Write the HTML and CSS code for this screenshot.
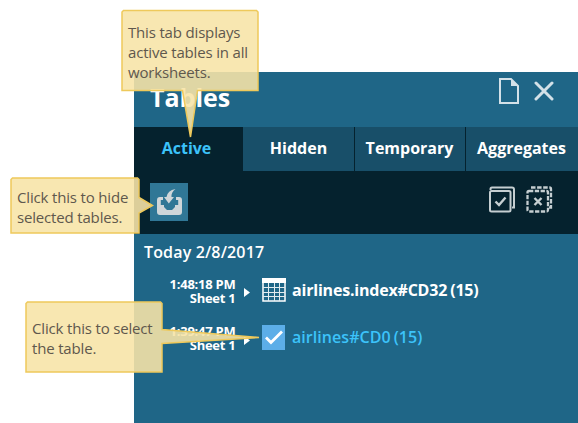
FILE: index.html
```html
<!DOCTYPE html>
<html lang="en">
<head>
<meta charset="utf-8">
<title>Tables</title>
<link rel="stylesheet" href="styles.css">
</head>
<body>
<main class="panel">
  <header class="head">
    <h1>Tables</h1>
    <div class="head-icons">
      <svg width="20" height="26" viewBox="0 0 20 26"><path d="M1 1H12L19 8V25H1Z" fill="none" stroke="#d3e1e8" stroke-width="2"/><path d="M12 1V8H19Z" fill="#d3e1e8"/></svg>
      <svg width="20" height="20" viewBox="0 0 20 20"><path d="M2 2L18 18M18 2L2 18" stroke="#d3e1e8" stroke-width="3" stroke-linecap="round"/></svg>
    </div>
  </header>
  <nav class="tabs">
    <span class="tab active">Active</span>
    <span class="tab hidden-tab">Hidden</span>
    <span class="tab">Temporary</span>
    <span class="tab aggregates">Aggregates</span>
  </nav>
  <div class="toolbar">
    <span class="hide-button">
      <svg width="38" height="38" viewBox="0 0 38 38"><path d="M7 17Q7 14 10 14H13V17H10.800V22H14V24L17 27H22L25 24V22H28.200V17H26V14H29Q32 14 32 17V29Q32 32 29 32H10Q7 32 7 29Z" fill="#cfd6d9"/><path d="M25.500 6Q21 9.500 21.500 14H24L18.800 20.500L14 14H16.500Q17.500 7.500 25.500 6Z" fill="#cfd6d9"/></svg>
    </span>
    <div class="select-icons">
      <svg width="27" height="27" viewBox="0 0 27 27" fill="none" stroke="#c5ced1" stroke-width="2"><rect x="2" y="5" width="20.500" height="20.500" rx="1.500"/><path d="M2.500 4V3Q2.500 1.500 4 1.500H24Q26 1.500 26 3.500V21.500H24"/><path d="M7.500 15.500L11 19L17.500 11.500" stroke-width="2.400"/></svg>
      <svg width="27" height="27" viewBox="0 0 27 27" fill="none" stroke="#c5ced1" stroke-width="2.300"><rect x="1.500" y="5" width="20.500" height="20.500" rx="1.500" stroke-dasharray="4.300 1.500"/><path d="M5 1.500H23.500Q25 1.500 25 3V21.500H23" stroke-dasharray="4.500 1.600"/><path d="M8.500 12L15.500 19M15.500 12L8.500 19" stroke-width="2.400"/></svg>
    </div>
  </div>
  <section class="list">
    <h2>Today 2/8/2017</h2>
    <div class="row">
      <div class="stamp"><div>1:48:18 PM</div><div>Sheet 1</div></div>
      <svg class="arrow" width="6" height="9" viewBox="0 0 6 9"><path d="M0 0L6 4.500L0 9Z" fill="#fff"/></svg>
      <svg class="mark" width="24" height="24" viewBox="0 0 24 24" fill="none" stroke="#e3ecf0"><rect x="1" y="1" width="22" height="22" stroke="#fff" stroke-width="1.500"/><path d="M0 2.500H24" stroke="#fff" stroke-width="5"/><path d="M1 9.500H23M1 14.500H23M1 18.500H23M6.500 5V23M12.500 5V23M17.500 5V23"/></svg>
      <span class="name">airlines.index#CD32</span><span class="count">(15)</span>
    </div>
    <div class="row selected">
      <div class="stamp"><div>1:39:47 PM</div><div>Sheet 1</div></div>
      <svg class="arrow" width="6" height="9" viewBox="0 0 6 9"><path d="M0 0L6 4.500L0 9Z" fill="#fff"/></svg>
      <svg class="mark" width="24" height="25" viewBox="0 0 24 25"><path d="M0 0H23V25H0Z" fill="#5caee8"/><path d="M4 12.500L9 17.500L20 6.500" fill="none" stroke="#fff" stroke-width="2.800"/></svg>
      <span class="name">airlines#CD0</span><span class="count">(15)</span>
    </div>
  </section>
</main>
<svg class="bubbles" width="578" height="423" viewBox="0 0 578 423">
  <path d="M123.500 10.500H256.500L258 12V90.500H197.500L190.500 137L182.500 90.500H122V12Z"/>
  <path d="M12.500 178H137.500L139 179.500V197.500L152.500 205.500L139 213V233H11V179.500Z"/>
  <path d="M27.500 302H160.500L162 303.500V329.500L259 337.500L162 343.500V372H26V303.500Z"/>
</svg>
<p class="note note-tab">This tab displays<br>active tables in all<br>worksheets.</p>
<p class="note note-hide">Click this to hide<br>selected tables.</p>
<p class="note note-select">Click this to select<br>the table.</p>
</body>
</html>
```
FILE: styles.css
```css
* { box-sizing: border-box; }
body {
  margin: 0;
  height: 423px;
  overflow: hidden;
  background: #fff;
  font-family: "Open Sans", sans-serif;
  color: #fff;
}
svg { display: block; flex: none; }
h1, h2, p { margin: 0; }
.panel {
  margin: 72px 0 0 134px;
  width: 444px;
  height: 351px;
  background: #1f6687;
}
.head {
  display: flex;
  justify-content: space-between;
  height: 55px;
  padding: 6px 24px 0 16px;
}
h1 { font-size: 25px; line-height: 38px; font-weight: 700; }
.head-icons { display: flex; gap: 15px; }
.head-icons svg:last-child { margin-top: 3px; }
.tabs {
  display: grid;
  grid-template-columns: 109px 112px 111px 112px;
  height: 44px;
  background: #05222e;
}
.tab {
  background: #184f69;
  border-right: 1px solid #05222e;
  padding-right: 1px;
  text-align: center;
  font-size: 16px;
  font-weight: 700;
  line-height: 42px;
}
.tab.hidden-tab { padding-right: 0; }
.tab:last-child { border-right: 0; }
.tab.active { background: #05222e; color: #3cc3fa; padding-right: 3px; }
.toolbar {
  display: flex;
  justify-content: space-between;
  height: 63px;
  padding: 12px 25px 0 16px;
  background: #05222e;
}
.hide-button { width: 38px; height: 38px; background: #307796; }
.select-icons { display: flex; gap: 11px; padding-top: 3px; }
.list { padding: 7px 0 0 10px; }
h2 { font-size: 16px; line-height: 22px; font-weight: 600; letter-spacing: .15px; }
.row { display: flex; height: 48px; padding-top: 14px; }
.stamp {
  width: 91.5px;
  font-size: 13px;
  line-height: 14px;
  font-weight: 700;
  letter-spacing: -.25px;
  text-align: right;
}
.selected .stamp { margin-top: -1px; }
.arrow { margin: 11px 0 0 8.500px; }
.mark { margin: 0 6px 0 12px; }
.row:not(.selected) .mark { margin-top: 1px; }
.name, .count { font-size: 16px; font-weight: 700; letter-spacing: -.2px; line-height: 26px; white-space: nowrap; }
.count { margin-left: 3px; }
.selected .name, .selected .count { color: #3cc3fa; font-weight: 600; letter-spacing: .05px; line-height: 24px; }
.bubbles { position: absolute; left: 0; top: 0; }
.bubbles path { fill: rgba(247, 228, 167, .89); stroke: #eec95b; stroke-width: 1.500; }
.note {
  position: absolute;
  font-size: 15px;
  line-height: 20px;
  letter-spacing: -.17px;
  color: #5f584d;
  white-space: nowrap;
}
.note-tab { left: 128px; top: 22px; }
.note-hide { left: 17px; top: 187px; }
.note-select { left: 32px; top: 318px; }
```
